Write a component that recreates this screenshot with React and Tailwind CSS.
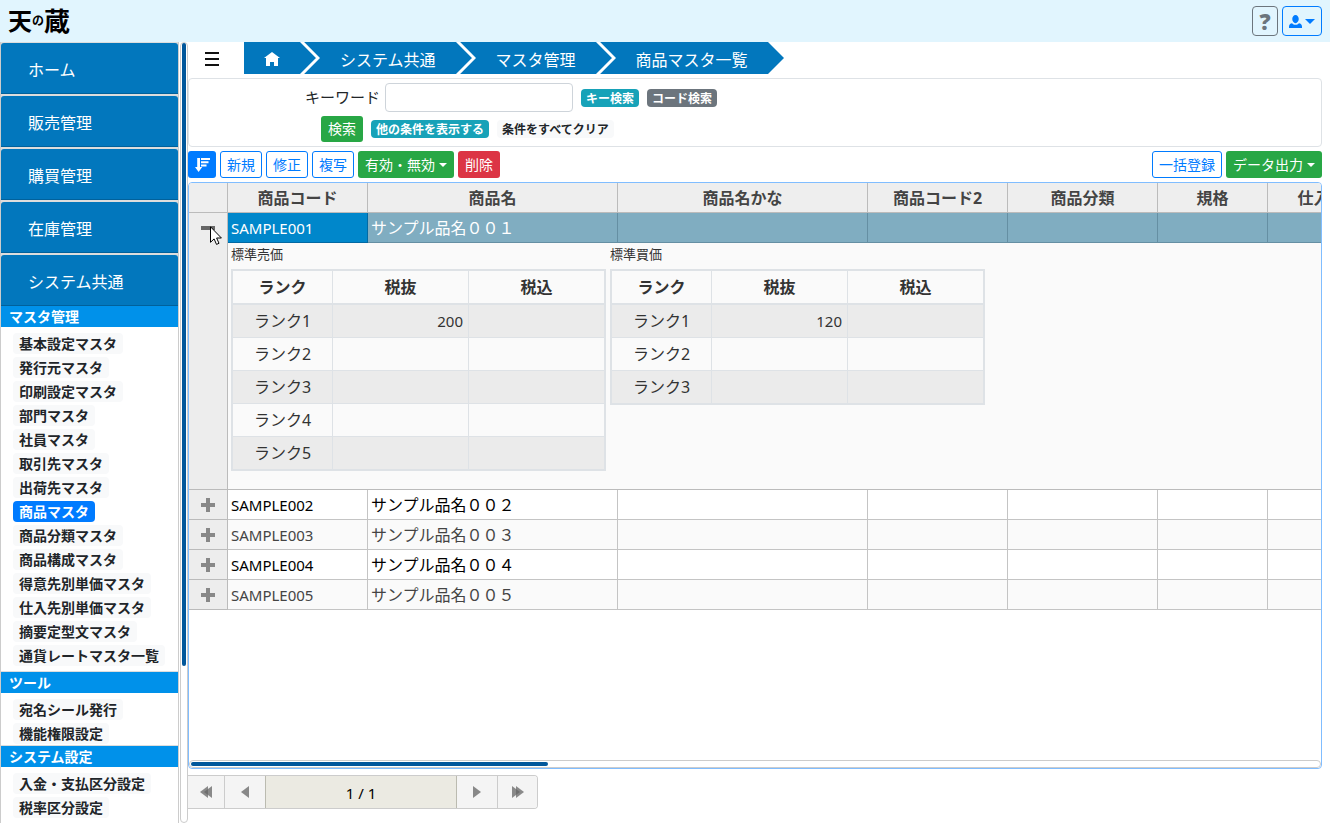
import React from "react";

const columns = [
  { label: "商品コード", width: "w-[140px]" },
  { label: "商品名", width: "w-[250px]" },
  { label: "商品名かな", width: "w-[250px]" },
  { label: "商品コード2", width: "w-[140px]" },
  { label: "商品分類", width: "w-[150px]" },
  { label: "規格", width: "w-[110px]" },
  { label: "仕入単価", width: "w-[124px]" },
];

const menuButtons = ["ホーム", "販売管理", "購買管理", "在庫管理", "システム共通"];

const masterItems = [
  "基本設定マスタ",
  "発行元マスタ",
  "印刷設定マスタ",
  "部門マスタ",
  "社員マスタ",
  "取引先マスタ",
  "出荷先マスタ",
  "商品マスタ",
  "商品分類マスタ",
  "商品構成マスタ",
  "得意先別単価マスタ",
  "仕入先別単価マスタ",
  "摘要定型文マスタ",
  "通貨レートマスタ一覧",
];
const toolItems = ["宛名シール発行", "機能権限設定"];
const settingItems = ["入金・支払区分設定", "税率区分設定"];

const otherRows = [
  { code: "SAMPLE002", name: "サンプル品名００２", alt: false },
  { code: "SAMPLE003", name: "サンプル品名００３", alt: true },
  { code: "SAMPLE004", name: "サンプル品名００４", alt: false },
  { code: "SAMPLE005", name: "サンプル品名００５", alt: true },
];

function OpenIcon({ d, className }) {
  return (
    <svg viewBox="0 0 8 8" className={className} fill="currentColor" aria-hidden="true">
      <path d={d} />
    </svg>
  );
}

const HOME = "M4 0l-4 3h1v4h2v-2h2v2h2v-4.03l1 .03-4-3z";
const PERSON =
  "M4 0c-1.1 0-2 1.12-2 2.5s.9 2.5 2 2.5 2-1.12 2-2.5-.9-2.5-2-2.5zm-2.09 5c-1.06.05-1.91.92-1.91 2v1h8v-1c0-1.08-.84-1.95-1.91-2-.54.61-1.28 1-2.09 1-.81 0-1.55-.39-2.09-1z";

function SortIcon() {
  return (
    <svg viewBox="0 0 16 16" className="h-4 w-4" fill="currentColor" aria-hidden="true">
      <path d="M3.2 1H6v9h2.2L4.6 15 1 10h2.2zM7 1h9v2H7zM7 4.3h7.5v2H7zM7 7.6h5.5v2H7z" />
    </svg>
  );
}

function Caret({ className = "h-1 w-2" }) {
  return (
    <svg viewBox="0 0 8 4" className={className} fill="currentColor" aria-hidden="true">
      <path d="M0 0h8l-4 4z" />
    </svg>
  );
}

function Chevron() {
  return (
    <svg viewBox="0 0 20 32" className="h-8 w-5 shrink-0 bg-[#0277bd]" aria-hidden="true">
      <path d="M1 -1L18 16L1 33" fill="none" stroke="#fff" strokeWidth="3" />
    </svg>
  );
}

function SectionTitle({ children, first }) {
  return (
    <h2
      className={
        first
          ? "h-[21px] bg-[#0091ea] pl-2 text-[14px] leading-[21px] font-bold text-white"
          : "h-[22px] border-t border-[#ddd] bg-[#0091ea] pl-2 text-[14px] leading-[21px] font-bold text-white"
      }
    >
      {children}
    </h2>
  );
}

function MenuList({ items, active, className }) {
  return (
    <ul className={"flex flex-col items-start gap-[3px] pt-[6px] pl-3 " + className}>
      {items.map((item) => (
        <li key={item} className="flex">
          <a
            href="#"
            className={
              item === active
                ? "h-[21px] rounded bg-[#007bff] px-[6px] text-[14px] leading-[21px] font-bold text-white"
                : "h-[21px] rounded bg-[#f8f9fa] px-[6px] text-[14px] leading-[21px] font-bold text-[#212529]"
            }
          >
            {item}
          </a>
        </li>
      ))}
    </ul>
  );
}

function OutlineButton({ children }) {
  return (
    <button className="h-[27px] rounded-[3px] border border-[#007bff] bg-white px-[6px] text-[14px] leading-[25px] text-[#007bff]">
      {children}
    </button>
  );
}

function DropButton({ children }) {
  return (
    <button className="flex h-[27px] items-center gap-1 rounded-[3px] bg-[#28a745] px-[7px] text-[14px] leading-[27px] text-white">
      {children}
      <Caret />
    </button>
  );
}

function rowClass(index, count) {
  const background = index % 2 === 0 ? "bg-[#ebebeb]" : "bg-[#fafafa]";
  const height = index === count - 1 ? "h-8" : "h-[33px]";
  return background + " " + height;
}

function PriceTable({ title, prices }) {
  return (
    <div className="flex w-[375px] flex-col">
      <div id={title} className="h-[26px] text-[13px] leading-[22px] text-[#333]">
        {title}
      </div>
      <table aria-labelledby={title} className="w-full table-fixed border-separate border-spacing-0 border-2 border-[#dee2e6] text-[16px] leading-6 text-[#333]">
        <thead>
          <tr className="h-[34px]">
            <th className="w-[100px] border-r border-b-2 border-[#dee2e6] p-0 font-bold">ランク</th>
            <th className="w-[136px] border-r border-b-2 border-[#dee2e6] p-0 font-bold">税抜</th>
            <th className="border-b-2 border-[#dee2e6] p-0 font-bold">税込</th>
          </tr>
        </thead>
        <tbody className="[&>tr:last-child>td]:border-b-0">
          {prices.map((price, i) => (
            <tr key={i} className={rowClass(i, prices.length)}>
              <td className="border-r border-b border-[#dee2e6] p-0 text-center">ランク{i + 1}</td>
              <td className="border-r border-b border-[#dee2e6] p-0 pr-[5px] text-right text-[15px]">{price}</td>
              <td className="border-b border-[#dee2e6] p-0" />
            </tr>
          ))}
        </tbody>
      </table>
    </div>
  );
}

function Sidebar() {
  return (
    <div className="flex shrink-0 pb-1">
      <nav className="w-[179px] overflow-hidden border-x border-[#ccc] bg-white">
        {menuButtons.map((label, i) => (
          <div
            key={label}
            className={
              i === menuButtons.length - 1
                ? "border-t border-[#ddd] bg-[#ddd]"
                : "border-y border-[#ddd] bg-[#ddd]"
            }
          >
            <button className="block h-[51px] w-full rounded-t-[3px] border-b border-[#01619b] bg-[#0277bd] pt-[3px] pl-[27px] text-left text-[16px] text-white">
              {label}
            </button>
          </div>
        ))}
        <SectionTitle first>マスタ管理</SectionTitle>
        <MenuList items={masterItems} active="商品マスタ" className="pb-[5px]" />
        <SectionTitle>ツール</SectionTitle>
        <MenuList items={toolItems} className="pb-px" />
        <SectionTitle>システム設定</SectionTitle>
        <MenuList items={settingItems} className="pb-px" />
      </nav>
      <div className="ml-px w-2 rounded border border-[#ccc] bg-white">
        <div className="mx-px h-[80%] rounded-full bg-[#01579b]" />
      </div>
    </div>
  );
}

function Breadcrumb() {
  return (
    <div className="flex h-8 items-center">
      <button aria-label="メニュー" className="flex h-8 w-14 items-center pt-[2px] pl-4">
        <svg viewBox="0 0 16 14" className="h-[14px] w-4" fill="#111" aria-hidden="true">
          <path d="M1 0h14v2H1zM1 6h14v2H1zM1 12h14v2H1z" />
        </svg>
      </button>
      <nav className="flex h-8 text-[16px] leading-9 text-white">
        <a href="#" aria-label="ホーム" className="flex h-8 items-center bg-[#0277bd] px-5">
          <OpenIcon d={HOME} className="mt-1 h-4 w-4" />
        </a>
        <Chevron />
        <a href="#" className="h-8 bg-[#0277bd] px-5">システム共通</a>
        <Chevron />
        <a href="#" className="h-8 bg-[#0277bd] px-5">マスタ管理</a>
        <Chevron />
        <a href="#" className="h-8 bg-[#0277bd] px-5">商品マスタ一覧</a>
        <svg viewBox="0 0 16 32" className="h-8 w-4" fill="#0277bd" aria-hidden="true">
          <path d="M0 0L16 16L0 32z" />
        </svg>
      </nav>
    </div>
  );
}

function SearchPanel() {
  const badge = "h-[18px] rounded px-[5px] text-[12px] leading-5 font-bold";
  return (
    <div className="mt-1 mr-2 flex h-[69px] flex-col gap-1 rounded border border-[#dee2e6] pt-1">
      <div className="flex items-center pl-[116px]">
        <label htmlFor="keyword" className="mr-[5px] text-[15px] leading-[29px] text-[#212529]">
          キーワード
        </label>
        <input id="keyword" type="text" className="h-[29px] w-[188px] rounded border border-[#ced4da] px-2 text-[14px]" />
        <button className={badge + " ml-2 bg-[#17a2b8] text-white"}>キー検索</button>
        <button className={badge + " ml-2 bg-[#6c757d] text-white"}>コード検索</button>
      </div>
      <div className="flex items-center gap-2 pl-[132px]">
        <button className="h-[26px] rounded-[3px] bg-[#28a745] px-[7px] text-[14px] leading-[26px] text-white">検索</button>
        <button className={badge + " bg-[#17a2b8] text-white"}>他の条件を表示する</button>
        <button className={badge + " bg-[#f8f9fa] text-[#212529]"}>条件をすべてクリア</button>
      </div>
    </div>
  );
}

function Toolbar() {
  return (
    <div className="mt-1 mr-2 flex gap-1">
      <button aria-label="並び替え" className="flex h-[27px] w-7 items-center justify-center rounded-[3px] bg-[#007bff] text-white">
        <SortIcon />
      </button>
      <OutlineButton>新規</OutlineButton>
      <OutlineButton>修正</OutlineButton>
      <OutlineButton>複写</OutlineButton>
      <DropButton>有効・無効</DropButton>
      <button className="h-[27px] rounded-[3px] bg-[#dc3545] px-[7px] text-[14px] leading-[27px] text-white">削除</button>
      <div className="flex-1" />
      <OutlineButton>一括登録</OutlineButton>
      <DropButton>データ出力</DropButton>
    </div>
  );
}

function Cursor() {
  return (
    <svg viewBox="0 0 12 19" className="absolute top-[13px] left-[21px] h-[19px] w-3" aria-hidden="true">
      <path d="M.5 .8V16.3L4.1 12.9L6.5 18.4L9 17.3L6.6 12H11.4z" fill="#fff" stroke="#000" />
    </svg>
  );
}

function ProductGrid() {
  const emptyKeys = [0, 1, 2, 3, 4];
  return (
    <div className="mt-1 mr-2 flex min-h-0 flex-1 flex-col overflow-hidden rounded border border-[#80bdff] bg-white">
      <div className="min-h-0 flex-1 overflow-hidden">
        <table className="w-[1203px] table-fixed border-separate border-spacing-0 text-[16px]">
          <thead>
            <tr className="h-[30px] bg-[#eee] text-[#444]">
              <th className="w-[39px] border-r border-b border-[#bbb] p-0" />
              {columns.map((c) => (
                <th key={c.label} className={c.width + " border-r border-b border-[#bbb] p-0 leading-6 font-bold"}>
                  {c.label}
                </th>
              ))}
            </tr>
          </thead>
          <tbody>
            <tr className="h-[30px] text-white">
              <td rowSpan={2} className="border-r border-b border-[#bbb] bg-[#ededed] p-0 align-top">
                <div className="relative">
                  <button aria-label="閉じる" className="flex h-[30px] w-full items-center justify-center">
                    <svg viewBox="0 0 14 14" className="h-[14px] w-[14px]" fill="#666" aria-hidden="true">
                      <path d="M0 5h14v4H0z" />
                    </svg>
                  </button>
                  <Cursor />
                </div>
              </td>
              <td className="border-r border-b border-[#0269a3] bg-[#0087cb] p-0 pl-[3px] text-[15px] leading-6">SAMPLE001</td>
              <td className="border-r border-b border-[#658fa3] bg-[#80adc1] p-0 pl-[3px] leading-6">サンプル品名００１</td>
              {emptyKeys.map((k) => (
                <td key={k} className="border-r border-b border-[#658fa3] bg-[#80adc1] p-0" />
              ))}
            </tr>
            <tr className="h-[247px]">
              <td colSpan={7} className="border-b border-[#bbb] bg-[#fafafa] p-0 align-top">
                <div className="flex items-start gap-1 pl-[3px]">
                  <PriceTable title="標準売価" prices={["200", "", "", "", ""]} />
                  <PriceTable title="標準買価" prices={["120", "", ""]} />
                </div>
              </td>
            </tr>
            {otherRows.map((row) => (
              <tr key={row.code} className={row.alt ? "h-[30px] bg-[#fafafa] text-[#444]" : "h-[30px] bg-white text-black"}>
                <td className="border-r border-b border-[#bbb] bg-[#ededed] p-0">
                  <button aria-label="開く" className="flex h-[29px] w-full items-center justify-center">
                    <svg viewBox="0 0 14 14" className="h-[14px] w-[14px]" fill="#888" aria-hidden="true">
                      <path d="M5 0h4v5h5v4H9v5H5V9H0V5h5z" />
                    </svg>
                  </button>
                </td>
                <td className="border-r border-b border-[#c4c4c4] p-0 pl-[3px] text-[15px] leading-6">{row.code}</td>
                <td className="border-r border-b border-[#c4c4c4] p-0 pl-[3px] leading-6">{row.name}</td>
                {emptyKeys.map((k) => (
                  <td key={k} className="border-r border-b border-[#c4c4c4] p-0" />
                ))}
              </tr>
            ))}
          </tbody>
        </table>
      </div>
      <div className="h-2 shrink-0 rounded border border-[#ccc] bg-white p-px">
        <div className="h-1 w-[357px] rounded-full bg-[#01579b]" />
      </div>
    </div>
  );
}

function Pager() {
  const cell = "flex items-center justify-center bg-[#f4f4f4]";
  return (
    <div className="mt-[6px] mb-[18px] flex h-[34px] shrink-0 self-start overflow-hidden rounded-r border-y border-r border-[#ccc]">
      <button aria-label="最初のページ" className={cell + " w-[37px] border-r border-[#ccc]"}>
        <svg viewBox="0 0 12 12" className="h-3 w-3" fill="#666" fillOpacity=".75" aria-hidden="true">
          <path d="M0 6L8 0V12z" />
          <path d="M4 6L12 0V12z" />
        </svg>
      </button>
      <button aria-label="前のページ" className={cell + " w-10"}>
        <svg viewBox="0 0 8 12" className="h-3 w-2" fill="#888" aria-hidden="true">
          <path d="M0 6L8 0V12z" />
        </svg>
      </button>
      <div className="w-[192px] border-x border-[#bbbbb0] bg-[#ebeae2] text-center text-[15px] leading-[34px] text-black">1 / 1</div>
      <button aria-label="次のページ" className={cell + " w-[41px] border-r border-[#ccc]"}>
        <svg viewBox="0 0 8 12" className="h-3 w-2" fill="#888" aria-hidden="true">
          <path d="M8 6L0 0V12z" />
        </svg>
      </button>
      <button aria-label="最後のページ" className={cell + " w-[39px]"}>
        <svg viewBox="0 0 12 12" className="h-3 w-3" fill="#666" fillOpacity=".75" aria-hidden="true">
          <path d="M8 6L0 0V12z" />
          <path d="M12 6L4 0V12z" />
        </svg>
      </button>
    </div>
  );
}

export default function App() {
  return (
    <div className="flex h-screen flex-col overflow-hidden bg-white font-['Noto_Sans','Noto_Sans_CJK_JP',sans-serif]">
      <header className="flex h-[42px] shrink-0 items-center justify-between bg-[#e1f5fe] pr-2 pl-2">
        <a href="#" className="flex items-center font-bold text-black">
          <span className="text-[24px] leading-[42px]">天</span>
          <span className="text-[12px] leading-[42px]">の</span>
          <span className="text-[26px] leading-[42px]">蔵</span>
        </a>
        <div className="flex gap-1">
          <button aria-label="ヘルプ" className="h-[30px] w-[26px] rounded border border-[#6c757d] text-[22px] leading-7 font-black text-[#6c757d]">
            ?
          </button>
          <button aria-label="ユーザー" className="flex h-[30px] w-10 items-center justify-center gap-[3px] rounded border border-[#007bff] text-[#007bff]">
            <OpenIcon d={PERSON} className="h-[13px] w-[13px]" />
            <Caret className="h-[5px] w-[10px]" />
          </button>
        </div>
      </header>
      <div className="flex min-h-0 flex-1">
        <Sidebar />
        <main className="flex min-w-0 flex-1 flex-col">
          <Breadcrumb />
          <SearchPanel />
          <Toolbar />
          <ProductGrid />
          <Pager />
        </main>
      </div>
    </div>
  );
}
